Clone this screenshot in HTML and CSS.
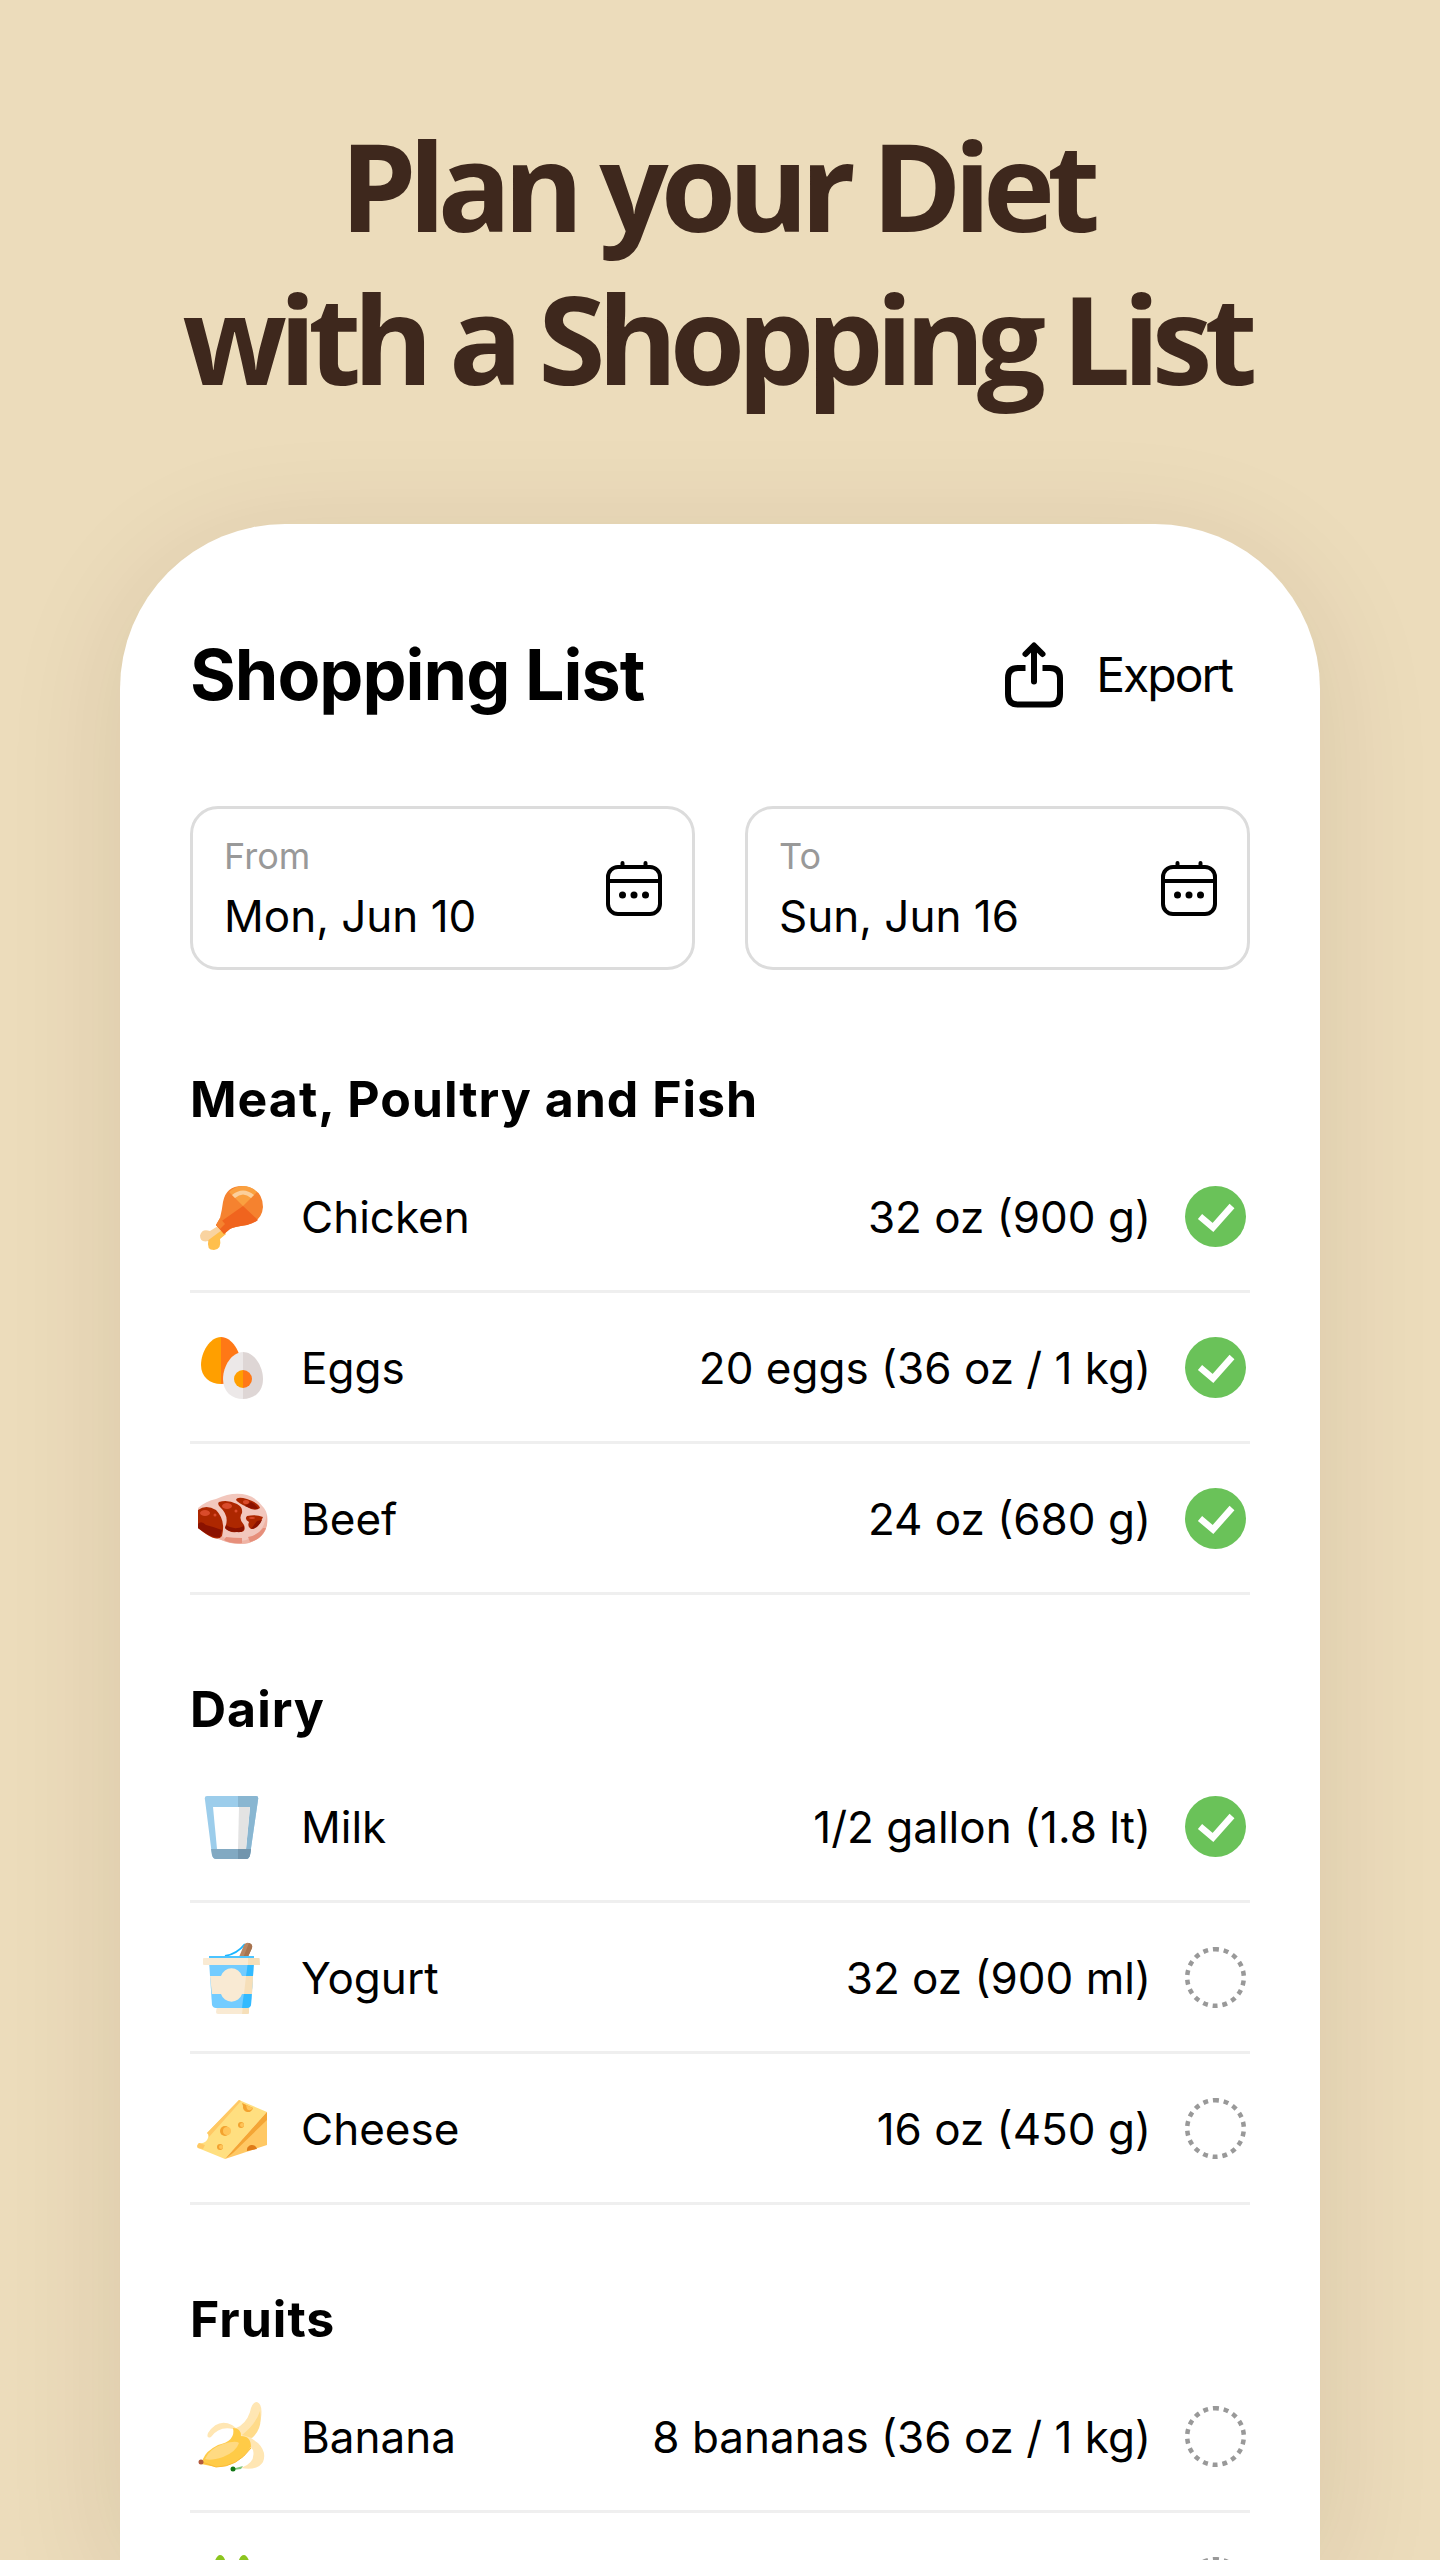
FILE: index.html
```html
<!DOCTYPE html>
<html lang="en">
<head>
<meta charset="utf-8">
<meta name="viewport" content="width=device-width, initial-scale=1">
<title>Shopping List</title>
<link rel="stylesheet" href="styles.css">
</head>
<body>
<div class="page">
  <h1 class="headline">Plan your Diet<br>with a Shopping List</h1>
  <main class="card">
    <header class="card-header">
      <h2 class="card-title">Shopping List</h2>
      <button class="export" type="button">
        <svg class="export-icon" viewBox="0 0 64 68" fill="none" stroke="#000" stroke-width="6" stroke-linejoin="round">
          <path d="M23.500 28H16Q6 28 6 38V54Q6 64.500 16 64.500H48Q58 64.500 58 54V38Q58 28 48 28H40.500"/>
          <path d="M32 41.500V6M23.500 14L32 5.500L40.500 14" stroke-linecap="round"/>
        </svg>
        <span>Export</span>
      </button>
    </header>

    <div class="dates">
      <div class="date">
        <div class="date-text">
          <label class="date-label" for="from">From</label>
          <input class="date-value" id="from" type="text" value="Mon, Jun 10" readonly>
        </div>
        <svg class="date-icon" viewBox="0 0 56 56" fill="none" stroke="#000" stroke-width="4"><rect x="2" y="7" width="52" height="47" rx="10"/><path d="M2 21H54"/><path d="M16.500 7V3M39.500 7V3" stroke-linecap="round"/><g fill="#000" stroke="none"><circle cx="16.500" cy="35" r="3.500"/><circle cx="28" cy="35" r="3.500"/><circle cx="39.500" cy="35" r="3.500"/></g></svg>
      </div>
      <div class="date">
        <div class="date-text">
          <label class="date-label" for="to">To</label>
          <input class="date-value" id="to" type="text" value="Sun, Jun 16" readonly>
        </div>
        <svg class="date-icon" viewBox="0 0 56 56" fill="none" stroke="#000" stroke-width="4"><rect x="2" y="7" width="52" height="47" rx="10"/><path d="M2 21H54"/><path d="M16.500 7V3M39.500 7V3" stroke-linecap="round"/><g fill="#000" stroke="none"><circle cx="16.500" cy="35" r="3.500"/><circle cx="28" cy="35" r="3.500"/><circle cx="39.500" cy="35" r="3.500"/></g></svg>
      </div>
    </div>

    <section class="group">
      <h3 class="group-title">Meat, Poultry and Fish</h3>
      <ul class="items">
        <li class="item">
          <svg class="food" viewBox="0 0 72 72">
            <path d="M20 46L28 54L20 57Q24 67 17 69Q10 69 10.500 61Q2 63 2 55.500Q4 48 12 51Z" fill="#f9d3a0"/>
            <path d="M24 50L28 54L22 59Q24 69 16 70Q8 70 10.500 60Z" fill="#ffbf4d"/>
            <path d="M18 45L22 38Q24 30 25 22Q28 6 44 6Q65 8 65 27Q64 41 49 45Q35 47 32 49L26 54Z" fill="#f5822f"/>
            <path d="M45 26L18 45L26 54L32 49Q35 47 49 45Q57 43 60 40Z" fill="#f0641e"/>
            <path d="M22 38L18 45L22 49L27 44Z" fill="#f5822f"/>
            <path d="M31 12Q37 6 45 6Q53 6 59 12L45 26Z" fill="#faa040"/>
            <path d="M34 15Q45 6 56 15L53 18Q45 11 37 18Z" fill="#fbcf9b"/>
          </svg>
          <label class="name" for="chicken">Chicken</label>
          <span class="amount">32 oz (900 g)</span>
          <input class="tick" id="chicken" type="checkbox" checked>
        </li>
        <li class="item">
          <svg class="food" viewBox="0 0 72 72">
            <path d="M23 6C12 6 3 21 3 34C3 46 12 53 23 53Z" fill="#ff9f00"/>
            <path d="M23 6C34 6 43 21 43 34C43 46 34 53 23 53Z" fill="#ff7816"/>
            <path d="M45 21C34 21 25 35 25 48C25 61 34 68 45 68Z" fill="#ece8e8"/>
            <path d="M45 21C56 21 65 35 65 48C65 61 56 68 45 68Z" fill="#ded6d5"/>
            <path d="M45 39A9 9 0 0 0 45 57Z" fill="#ff9f00"/><path d="M45 39A9 9 0 0 1 45 57Z" fill="#ff7816"/>
          </svg>
          <label class="name" for="eggs">Eggs</label>
          <span class="amount">20 eggs (36 oz / 1 kg)</span>
          <input class="tick" id="eggs" type="checkbox" checked>
        </li>
        <li class="item">
          <svg class="food" viewBox="0 0 72 72">
            <path d="M0 26Q8 19 18 17Q35 9 49 13Q59 16 66 26Q71 33 69 43Q65 56 51 61Q37 64 23 58Q8 54 0 46Z" fill="#f2c7bd"/>
            <path d="M69 32Q65 56 43 59Q30 59 24 54L21 57Q37 64 51 61Q67 56 69 43Z" fill="#efb3a4"/>
            <path d="M28 55Q36 56 44 56L44 61Q33 62 26 58ZM50 55Q60 53 65 46L68 46Q64 57 52 60Z" fill="#e68f7b"/>
            <path d="M0 28Q8 22 18 28Q28 38 24 54Q20 60 8 52L0 46Z" fill="#ad2700"/>
            <path d="M0 42Q3 38 8 43Q16 45 24 48L22 55Q14 57 0 46Z" fill="#8b1200"/>
            <path d="M21 20Q29 17 39 22Q45 25 44 31Q40 37 46 43Q49 51 39 50Q31 51 27 46Q32 34 22 25Q19 22 21 20Z" fill="#ad2700"/>
            <path d="M28 43Q36 49 46 44Q47 51 39 50Q30 50 27 46Z" fill="#8b1200"/>
            <path d="M38 18Q39 14 49 17Q61 21 62 26Q57 30 49 25Q40 21 38 18ZM49 34Q58 32 65 35Q61 46 53 47Q49 45 51 40Q46 37 49 34Z" fill="#ad2700"/>
            <path d="M53 20Q60 24 60 27Q52 27 47 24ZM59 39L64 38Q60 47 53 47Z" fill="#8b1200"/>
            <ellipse cx="7" cy="31" rx="5" ry="3" fill="#d94b2b"/><ellipse cx="29" cy="24" rx="5" ry="3" fill="#d94b2b"/><ellipse cx="48" cy="20" rx="3" ry="2" fill="#d94b2b"/><circle cx="17" cy="33" r="1.500" fill="#d94b2b"/><circle cx="38" cy="29" r="1.500" fill="#d94b2b"/><ellipse cx="54" cy="36" rx="3" ry="1" fill="#d94b2b"/>
          </svg>
          <label class="name" for="beef">Beef</label>
          <span class="amount">24 oz (680 g)</span>
          <input class="tick" id="beef" type="checkbox" checked>
        </li>
      </ul>
    </section>

    <section class="group">
      <h3 class="group-title">Dairy</h3>
      <ul class="items">
        <li class="item">
          <svg class="food" viewBox="0 0 72 72">
            <path d="M9 6H58Q61 6 60 10L52 65Q51 69 48 69H18Q15 69 14 65L7 10Q6 6 9 6Z" fill="#9ccdeb"/>
            <path d="M40 6H58Q61 6 60 10L52 65Q51 69 48 69H40Z" fill="#89b6d1"/>
            <path d="M15 17H52L48 59H19Z" fill="#fff"/><path d="M41 17H52L48 59H40Z" fill="#e3e3e3"/>
            <path d="M13 59H53L52 65Q51 69 48 69H18Q15 69 14 65Z" fill="#82a9c2"/><path d="M40 59H53L52 65Q51 69 48 69H40Z" fill="#7295ad"/>
          </svg>
          <label class="name" for="milk">Milk</label>
          <span class="amount">1/2 gallon (1.8 lt)</span>
          <input class="tick" id="milk" type="checkbox" checked>
        </li>
        <li class="item">
          <svg class="food" viewBox="0 0 72 72">
            <path d="M47 3Q39 13 27 15" fill="none" stroke="#1ab5ff" stroke-width="2"/>
            <path d="M46 4Q48 1 51 2Q55 3 54 7L49 18L41 16Z" fill="#b88663"/><path d="M51 2Q55 3 54 7L49 18L45 17Z" fill="#a7734f"/>
            <path d="M19 65H51V72Q51 73 49 73H20Q18 73 18 71Z" fill="#f9ead3"/><path d="M45 65H51V72Q51 73 49 73H44Z" fill="#f6dfb9"/>
            <path d="M11 20H56L53 64Q52 67 49 67H18Q15 67 14 64Z" fill="#73ccff"/><path d="M50 20H56L53 64Q52 67 49 67H44Z" fill="#33baff"/>
            <path d="M12 35H23A11 11 0 0 1 44 35H55L54 53H44A11 11 0 0 1 23 53H14Z" fill="#f9ead3"/><path d="M48 35H55L54 53H46Z" fill="#f6dfb9"/>
            <path d="M11 16H56" stroke="#4cc4ff" stroke-width="2"/>
            <rect x="5" y="17" width="57" height="7" rx="1" fill="#f9ead3"/><path d="M50 17H61L62 24H50Z" fill="#f6dfb9"/>
          </svg>
          <label class="name" for="yogurt">Yogurt</label>
          <span class="amount">32 oz (900 ml)</span>
          <input class="tick" id="yogurt" type="checkbox">
        </li>
        <li class="item">
          <svg class="food" viewBox="0 0 72 72">
            <path d="M41 8L69 20L27 67L0 56Q-2 54 1 51Q8 52 10 46Q11 42 9 41Z" fill="#ffdf80"/>
            <path d="M41 8L43 9L11 45Q11 42 9 41ZM1 51L7 53L5 57L0 56Q-2 54 1 51Z" fill="#ffc864"/>
            <path d="M69 20V53L27 67Z" fill="#ffc864"/><path d="M69 20V28L35 61L27 67Z" fill="#f4a535"/>
            <path d="M44 11L55 16A5 5 0 0 1 45 14Z" fill="#f3a22e"/><path d="M48 13L55 16Q52 20 49 17Z" fill="#ffc458"/>
            <circle cx="27" cy="39" r="5" fill="#f3a22e"/><circle cx="29" cy="39" r="4" fill="#ffc458"/>
            <circle cx="43" cy="33" r="3" fill="#f3a22e"/><circle cx="44" cy="33" r="2" fill="#ffc458"/>
            <circle cx="22" cy="55" r="3" fill="#f3a22e"/><circle cx="23" cy="55" r="2" fill="#ffc458"/>
            <path d="M49 59A5 5 0 0 1 59 57Z" fill="#df7b18"/>
          </svg>
          <label class="name" for="cheese">Cheese</label>
          <span class="amount">16 oz (450 g)</span>
          <input class="tick" id="cheese" type="checkbox">
        </li>
      </ul>
    </section>

    <section class="group">
      <h3 class="group-title">Fruits</h3>
      <ul class="items">
        <li class="item">
          <svg class="food" viewBox="0 0 72 72">
            <path d="M38 28Q48 24 52 12Q54 2 59 2Q65 4 63 18Q61 31 53 38L60 43Q69 52 65 62Q59 71 43 68Q58 63 55 50L44 37Q42 33 35 29Q21 26 13 37Q8 39 10 33Q20 18 34 25Z" fill="#ffe6b3"/>
            <path d="M44 35Q58 24 62 11Q65 29 54 38Z" fill="#ffdb8a"/>
            <path d="M35 28Q43 28 43 36Q53 36 53 47Q40 67 18 67L3 64L5 59Q8 51 20 45Q38 41 35 28Z" fill="#ffcb47"/>
            <path d="M7 59Q11 49 25 44Q38 40 41 43Q38 52 25 57Q13 61 7 59Z" fill="#ffda82"/>
            <path d="M4 62L18 67Q39 67 53 48" fill="none" stroke="#fbbb36" stroke-width="1"/>
            <circle cx="3" cy="62" r="2.500" fill="#b35b3e"/><path d="M34 69L45 66L43 69L35 70Z" fill="#80c67a"/><circle cx="35" cy="69" r="2.500" fill="#137817"/>
          </svg>
          <label class="name" for="banana">Banana</label>
          <span class="amount">8 bananas (36 oz / 1 kg)</span>
          <input class="tick" id="banana" type="checkbox">
        </li>
        <li class="item">
          <svg class="food" viewBox="0 0 72 72">
            <path d="M16 12Q19 4 22 4Q26 4 28 12L24 26H20ZM40 12Q42 4 46 4Q49 4 52 12L48 26H44Z" fill="#8cc51f"/>
            <circle cx="34" cy="46" r="22" fill="#8cc51f"/>
          </svg>
          <span class="amount"></span>
          <input class="tick" type="checkbox" aria-label="Fruit">
        </li>
      </ul>
    </section>
  </main>
</div>
</body>
</html>
```
FILE: styles.css
```css
* {
  box-sizing: border-box;
}

body {
  margin: 0;
  background: #ecdcbb;
  color: #000;
  font-family: Inter, "Liberation Sans", sans-serif;
}

.page {
  display: flex;
  flex-direction: column;
  height: 100vh;
  padding: 109px 120px 0;
  overflow: hidden;
}

.headline {
  margin: 0 0 109px;
  padding-right: 8px;
  color: #3e281d;
  font-family: "Open Sans", "Noto Sans", sans-serif;
  font-size: 122px;
  font-weight: 700;
  line-height: 153px;
  letter-spacing: -8px;
  text-align: center;
}

.card {
  flex: 1;
  min-height: 0;
  padding: 100px 70px 0;
  border-radius: 165px 165px 0 0;
  background: #fff;
  box-shadow: 0 20px 120px rgba(60, 30, 0, 0.11);
}

.card-header {
  display: flex;
  align-items: center;
  justify-content: space-between;
  height: 100px;
  margin-bottom: 82px;
}

.card-title {
  margin: 0;
  font-size: 70px;
  font-weight: 700;
  letter-spacing: -1px;
}

.export {
  display: flex;
  align-items: center;
  gap: 28px;
  padding: 0 18px;
  border: 0;
  background: none;
  color: inherit;
  font: 400 48px Inter, sans-serif;
  letter-spacing: -2px;
}

.export-icon {
  width: 68px;
  height: 68px;
}

.dates {
  display: grid;
  grid-template-columns: 1fr 1fr;
  gap: 50px;
  margin-bottom: 15px;
}

.date {
  display: flex;
  align-items: center;
  gap: 16px;
  height: 164px;
  padding: 0 30px 0 31px;
  border: 3px solid #dcdcdc;
  border-radius: 28px;
}

.date-text {
  display: flex;
  flex: 1;
  flex-direction: column;
  min-width: 0;
  padding-top: 4px;
}

.date-label {
  color: #999;
  font-size: 36px;
  line-height: 52px;
}

.date-value {
  width: 100%;
  height: 68px;
  padding: 0;
  border: 0;
  background: none;
  color: inherit;
  font: 400 44px Inter, sans-serif;
}

.date-icon {
  flex: none;
  width: 56px;
  height: 56px;
}

.group-title {
  margin: 0;
  padding-top: 80px;
  height: 157px;
  font-size: 50px;
  font-weight: 700;
  line-height: 68px;
  letter-spacing: 1px;
}

.items {
  margin: 0;
  padding: 0;
  list-style: none;
}

.item {
  display: flex;
  align-items: center;
  height: 151px;
  padding: 0 4px 0 8px;
  border-bottom: 3px solid #efefef;
  font-size: 44px;
}

.food {
  flex: none;
  width: 72px;
  height: 72px;
  margin-right: 31px;
  overflow: visible;
}

.name,
.amount {
  padding-top: 1px;
}

.amount {
  margin-left: auto;
}

.tick {
  flex: none;
  width: 61px;
  height: 61px;
  margin: 0 0 0 34px;
  appearance: none;
  background: url("data:image/svg+xml,%3Csvg xmlns='http://www.w3.org/2000/svg' viewBox='0 0 61 61'%3E%3Ccircle cx='30.5' cy='30.5' r='28.3' fill='none' stroke='%23999' stroke-width='4.500' stroke-dasharray='4.900 4.900' transform='rotate(-93 30.500 30.500)'/%3E%3C/svg%3E") center / contain no-repeat;
}

.tick:checked {
  background-image: url("data:image/svg+xml,%3Csvg xmlns='http://www.w3.org/2000/svg' viewBox='0 0 61 61'%3E%3Ccircle cx='30.5' cy='30.5' r='30.5' fill='%236ac259'/%3E%3Cpath d='M15 30.500L28 41.500L47 20' fill='none' stroke='%23fff' stroke-width='6.500'/%3E%3C/svg%3E");
}
```
